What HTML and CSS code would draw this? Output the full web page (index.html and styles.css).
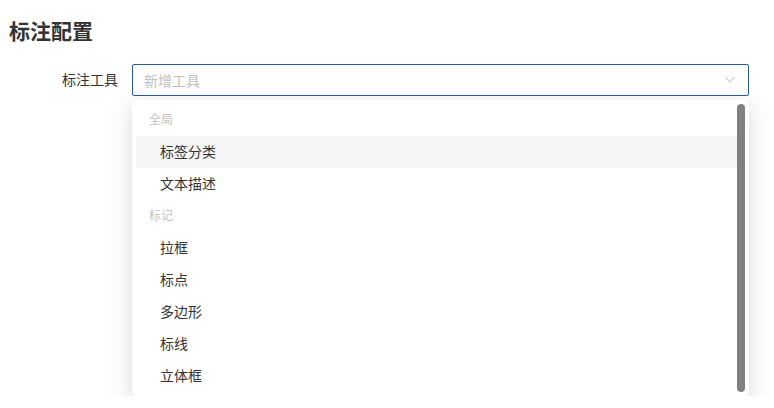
FILE: index.html
```html
<!DOCTYPE html>
<html lang="zh">
<head>
<meta charset="utf-8">
<title>标注配置</title>
<link rel="stylesheet" href="styles.css">
</head>
<body>
<div class="page">
  <h2 class="title">标注配置</h2>
  <div class="form-row">
    <div class="form-label">标注工具</div>
    <div class="select">
      <div class="select-box">
        <span class="placeholder">新增工具</span>
        <svg class="arrow" viewBox="0 0 1024 1024" width="12" height="12"><path fill="currentColor" d="M884 256h-75c-5.1 0-9.9 2.5-12.9 6.6L512 654.2 227.9 262.6c-3-4.1-7.8-6.6-12.9-6.6h-75c-6.5 0-10.3 7.4-6.5 12.7l352.6 486.1c12.8 17.6 39 17.6 51.7 0l352.6-486.1c3.9-5.3.1-12.7-6.4-12.7z"/></svg>
      </div>
      <div class="dropdown">
        <div class="list">
          <div class="items">
            <div class="group">全局</div>
            <div class="option active">标签分类</div>
            <div class="option">文本描述</div>
            <div class="group">标记</div>
            <div class="option">拉框</div>
            <div class="option">标点</div>
            <div class="option">多边形</div>
            <div class="option">标线</div>
            <div class="option">立体框</div>
          </div>
          <div class="scrollbar"></div>
        </div>
      </div>
    </div>
  </div>
</div>
</body>
</html>
```
FILE: styles.css
```css
* { box-sizing: border-box; }
html, body { margin: 0; padding: 0; background: #fff; }
body {
  font-family: "Noto Sans CJK SC", "Noto Sans", sans-serif;
  color: #333;
  font-size: 14px;
}
.page { padding: 16px 0 0 9px; }
.title {
  margin: 0;
  font-size: 21px;
  line-height: 28px;
  font-weight: 700;
  color: #333;
}
.form-row {
  display: flex;
  align-items: flex-start;
  margin-top: 20px;
}
.form-label {
  width: 123px;
  padding-right: 14px;
  text-align: right;
  height: 32px;
  line-height: 30px;
  font-size: 14px;
  color: #333;
}
.select {
  display: flex;
  flex-direction: column;
  gap: 4px;
  width: 617px;
}
.select-box {
  height: 32px;
  border: 1px solid #2a58a6;
  border-radius: 2px;
  display: flex;
  align-items: center;
  justify-content: space-between;
  padding: 0 11px;
  background: #fff;
}
.placeholder { color: #bfbfbf; font-size: 14px; line-height: 28px; }
.arrow { color: #c4c4c4; width: 12px; height: 12px; margin-right: 1px; }
.dropdown {
  width: 617px;
  background: #fff;
  border-radius: 4px;
  padding: 4px;
  box-shadow: 0 3px 6px -4px rgba(0,0,0,.12), 0 6px 16px 0 rgba(0,0,0,.08), 0 9px 28px 8px rgba(0,0,0,.05);
}
.list {
  display: flex;
  align-items: stretch;
}
.items { flex: 1; }
.group {
  height: 32px;
  line-height: 29px;
  padding-left: 13px;
  font-size: 12px;
  color: #c2c2c2;
}
.option {
  height: 32px;
  line-height: 30px;
  padding-left: 24px;
  font-size: 14px;
  color: #333;
}
.option.active { background: #f5f5f5; }
.scrollbar {
  width: 8px;
  flex: 0 0 8px;
  border-radius: 99px;
  background: #808080;
}
```
